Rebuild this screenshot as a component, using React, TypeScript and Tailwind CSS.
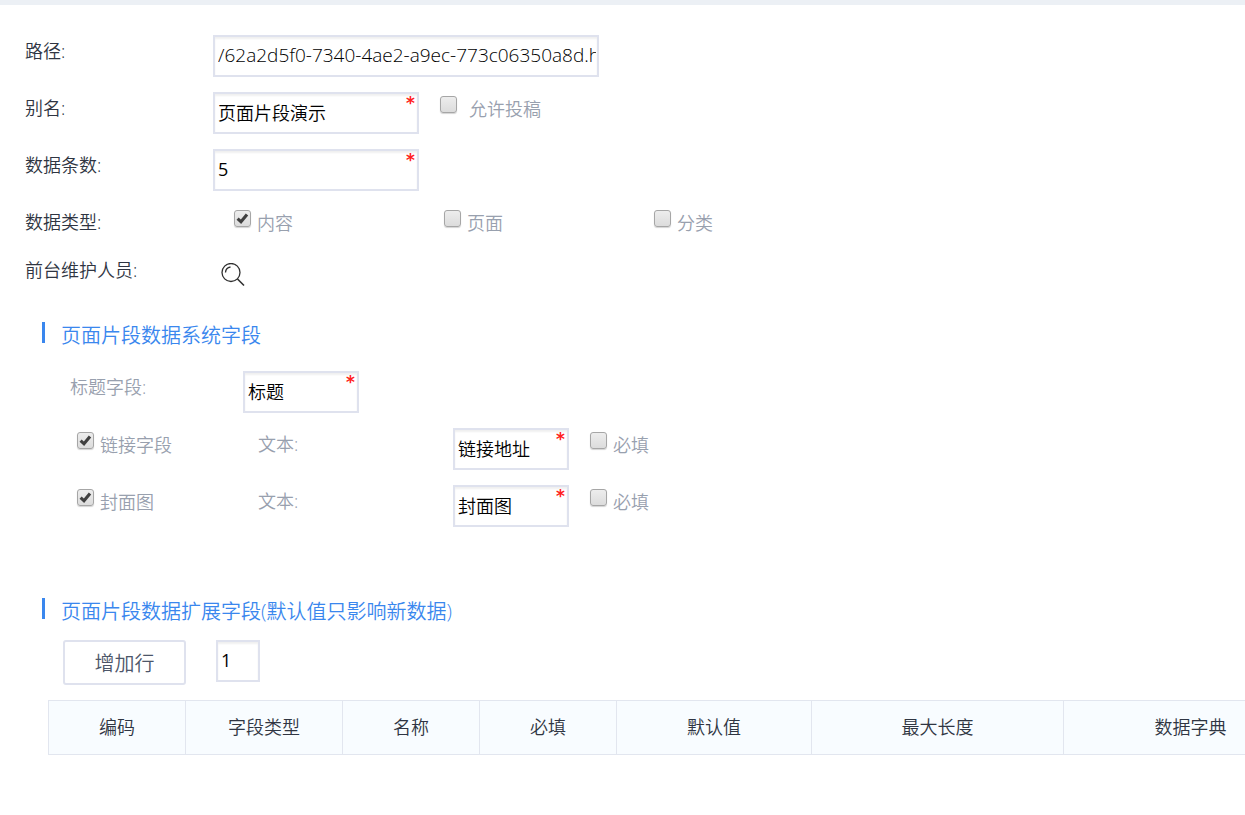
import { useState, type InputHTMLAttributes, type ReactNode } from 'react';
import { clsx } from 'clsx';

interface FieldProps extends InputHTMLAttributes<HTMLInputElement> {
  required?: boolean;
  wrapperClass?: string;
}

function TextField({ required, wrapperClass, className, ...props }: FieldProps) {
  return (
    <span className={clsx('relative block shrink-0', wrapperClass)}>
      <input
        type="text"
        className={clsx(
          'block h-[42px] w-full border-2 border-[#dfe2ee] bg-white pl-[3px] pr-px pb-[3px] text-black shadow-[inset_0_2px_2px_#f0f0f0] outline-none focus:border-blue-400',
          className
        )}
        {...props}
      />
      {required && (
        <span
          aria-hidden="true"
          className="pointer-events-none absolute right-1 top-[3px] font-['DejaVu_Sans'] text-[17px] font-bold leading-4 text-[#ff2020]"
        >
          *
        </span>
      )}
    </span>
  );
}

interface CheckProps {
  id: string;
  label: string;
  defaultChecked?: boolean;
  className?: string;
  wide?: boolean;
}

function Check({ id, label, defaultChecked = false, className, wide }: CheckProps) {
  const [checked, setChecked] = useState(defaultChecked);

  return (
    <div className={clsx('flex shrink-0 items-start pt-px text-[#98a0ae]', wide ? 'gap-3' : 'gap-[6px]', className)}>
      <span className="relative mt-[3px] block size-[17px]">
        <input
          id={id}
          type="checkbox"
          checked={checked}
          onChange={(e) => setChecked(e.target.checked)}
          className="block size-[17px] appearance-none rounded-[3px] border border-[#a6a6a6] bg-linear-to-b from-[#ededed] to-[#dcdcdc] shadow-[0_1px_1px_#d4d4d4]"
        />
        {checked && (
          <svg viewBox="0 0 17 17" className="pointer-events-none absolute inset-0 size-[17px]" fill="none">
            <path d="M3.6 8.6 L7 11.8 L13 4.4" stroke="#404040" strokeWidth="3.1" />
          </svg>
        )}
      </span>
      <label htmlFor={id} className="leading-8">
        {label}
      </label>
    </div>
  );
}

function Row({ label, htmlFor, children }: { label: string; htmlFor?: string; children: ReactNode }) {
  return (
    <div className="flex items-start">
      <label htmlFor={htmlFor} className="w-[188px] shrink-0 leading-8">
        {label}
      </label>
      {children}
    </div>
  );
}

function SectionTitle({ children }: { children: ReactNode }) {
  return (
    <h2 className="flex items-start gap-4 pl-[42px] text-[20px] leading-8 text-[#3a87ee]">
      <span className="mt-[2px] h-[21px] w-[3px] bg-[#3a87ee]" />
      {children}
    </h2>
  );
}

const linkedFields = [
  { id: 'link', name: '链接字段', text: '链接地址' },
  { id: 'cover', name: '封面图', text: '封面图' },
];

const columns = [
  { name: '编码', width: 'w-[137px]' },
  { name: '字段类型', width: 'w-[157px]' },
  { name: '名称', width: 'w-[137px]' },
  { name: '必填', width: 'w-[137px]' },
  { name: '默认值', width: 'w-[195px]' },
  { name: '最大长度', width: 'w-[252px]' },
  { name: '数据字典', width: 'w-[254px]' },
];

export default function App() {
  return (
    <div className="min-h-screen overflow-hidden border-t-[5px] border-[#ecf0f5] bg-white font-['Open_Sans','Noto_Sans_CJK_SC',sans-serif] text-[18px] font-[350] text-[#2f3542]">
      <form className="pt-[30px]" onSubmit={(e) => e.preventDefault()}>
        <div className="flex flex-col gap-[15px] pl-[25px]">
          <Row label="路径:" htmlFor="path">
            <TextField
              id="path"
              wrapperClass="w-[386px]"
              className="text-[19px]"
              defaultValue="/62a2d5f0-7340-4ae2-a9ec-773c06350a8d.html"
            />
          </Row>
          <Row label="别名:" htmlFor="alias">
            <TextField id="alias" required wrapperClass="w-[206px]" defaultValue="页面片段演示" />
            <Check id="contribute" label="允许投稿" className="ml-[21px]" wide />
          </Row>
          <Row label="数据条数:" htmlFor="size">
            <TextField id="size" required wrapperClass="w-[206px]" className="font-normal" defaultValue="5" />
          </Row>
          <Row label="数据类型:">
            <div className="flex pl-[21px]">
              <Check id="type-content" label="内容" className="w-[210px]" defaultChecked />
              <Check id="type-page" label="页面" className="w-[210px]" />
              <Check id="type-category" label="分类" className="w-[210px]" />
            </div>
          </Row>
          <Row label="前台维护人员:" htmlFor="staff">
            <button id="staff" type="button" aria-label="选择" className="px-2 pb-2 pt-[9px]">
              <svg viewBox="0 0 24 24" className="size-6" fill="none" stroke="#303030" strokeWidth="1.3">
                <circle cx="10" cy="9.5" r="9" />
                <path d="M4.5 9.5 A5.8 5.8 0 0 1 9.5 4" />
                <path d="M16.5 16 L23 22.5" strokeWidth="1.6" />
              </svg>
            </button>
          </Row>
        </div>

        <section className="mt-[25px]">
          <SectionTitle>页面片段数据系统字段</SectionTitle>
          <div className="mt-[19px] flex flex-col gap-[15px] pl-[70px] text-[#98a0ae]">
            <div className="flex items-start">
              <label htmlFor="title" className="w-[173px] leading-8">
                标题字段:
              </label>
              <TextField id="title" required wrapperClass="w-[116px]" defaultValue="标题" />
            </div>
            {linkedFields.map((field) => (
              <div key={field.id} className="flex items-start pl-[7px]">
                <Check id={field.id} label={field.name} className="w-[181px]" defaultChecked />
                <label htmlFor={`${field.id}-text`} className="w-[195px] leading-8">
                  文本:
                </label>
                <TextField id={`${field.id}-text`} required wrapperClass="w-[116px]" defaultValue={field.text} />
                <Check id={`${field.id}-required`} label="必填" className="ml-[21px]" />
              </div>
            ))}
          </div>
        </section>

        <section className="mt-[69px]">
          <SectionTitle>页面片段数据扩展字段(默认值只影响新数据)</SectionTitle>
          <div className="mt-3 flex items-start gap-[30px] pl-[63px]">
            <button
              type="button"
              className="h-[45px] w-[123px] rounded-[3px] border-2 border-[#dfe2ee] bg-white pt-[2px] text-[20px] text-[#4d5669]"
            >
              增加行
            </button>
            <TextField aria-label="行数" wrapperClass="w-11" className="font-normal" defaultValue="1" />
          </div>
          <div className="mt-[15px] overflow-hidden pl-12">
            <table className="w-[1270px] table-fixed border-collapse bg-[#f8fcff]">
              <thead>
                <tr>
                  {columns.map((column) => (
                    <th
                      key={column.name}
                      className={clsx('h-[54px] border border-[#e2e6ef] p-0 text-center font-[350]', column.width)}
                    >
                      {column.name}
                    </th>
                  ))}
                </tr>
              </thead>
            </table>
          </div>
        </section>
      </form>
    </div>
  );
}
